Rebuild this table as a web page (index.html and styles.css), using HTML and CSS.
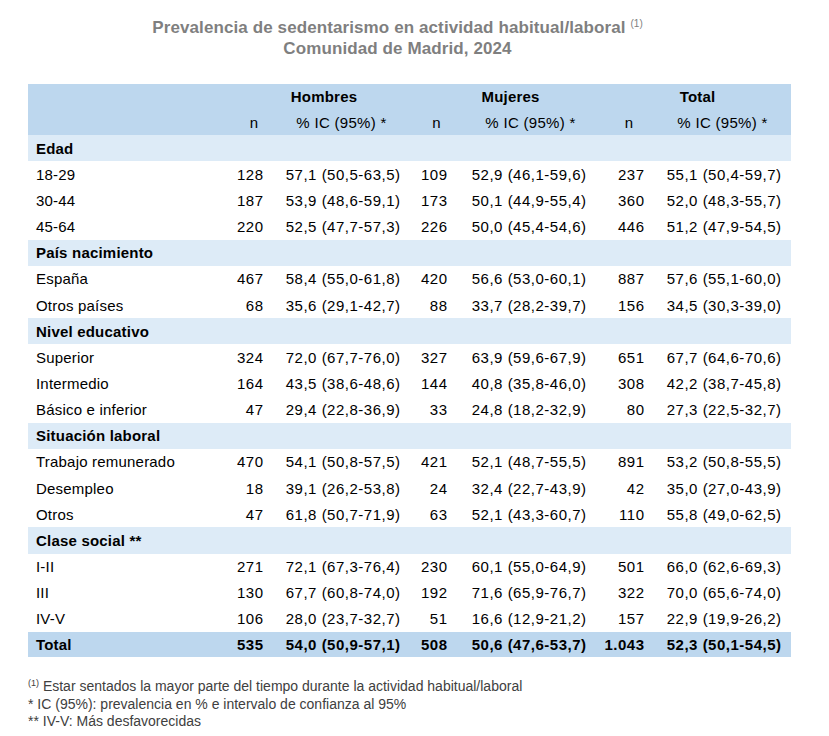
FILE: index.html
```html
<!DOCTYPE html>
<html lang="es">
<head>
<meta charset="utf-8">
<title>Prevalencia de sedentarismo</title>
<link rel="stylesheet" href="styles.css">
</head>
<body>
<div class="page">
  <header class="title">
    <div>Prevalencia de sedentarismo en actividad habitual/laboral <sup class="tsup">(1)</sup></div>
    <div>Comunidad de Madrid, 2024</div>
  </header>
  <table class="data">
    <colgroup>
      <col class="c-label"><col class="c-n1"><col class="c-p1"><col class="c-n2"><col class="c-p2"><col class="c-n3"><col class="c-p3">
    </colgroup>
    <thead>
      <tr class="h1"><th></th><th colspan="2" class="g-h">Hombres</th><th colspan="2" class="g-m">Mujeres</th><th colspan="2" class="g-t">Total</th></tr>
      <tr class="h2"><th></th><th>n</th><th>% IC (95%) *</th><th class="n-m">n</th><th class="p-m">% IC (95%) *</th><th class="n-t">n</th><th>% IC (95%) *</th></tr>
    </thead>
    <tbody>
      <tr class="sec"><td colspan="7">Edad</td></tr>
      <tr><td>18-29</td><td>128</td><td>57,1 (50,5-63,5)</td><td>109</td><td>52,9 (46,1-59,6)</td><td>237</td><td>55,1 (50,4-59,7)</td></tr>
      <tr><td>30-44</td><td>187</td><td>53,9 (48,6-59,1)</td><td>173</td><td>50,1 (44,9-55,4)</td><td>360</td><td>52,0 (48,3-55,7)</td></tr>
      <tr><td>45-64</td><td>220</td><td>52,5 (47,7-57,3)</td><td>226</td><td>50,0 (45,4-54,6)</td><td>446</td><td>51,2 (47,9-54,5)</td></tr>
      <tr class="sec"><td colspan="7">País nacimiento</td></tr>
      <tr><td>España</td><td>467</td><td>58,4 (55,0-61,8)</td><td>420</td><td>56,6 (53,0-60,1)</td><td>887</td><td>57,6 (55,1-60,0)</td></tr>
      <tr><td>Otros países</td><td>68</td><td>35,6 (29,1-42,7)</td><td>88</td><td>33,7 (28,2-39,7)</td><td>156</td><td>34,5 (30,3-39,0)</td></tr>
      <tr class="sec"><td colspan="7">Nivel educativo</td></tr>
      <tr><td>Superior</td><td>324</td><td>72,0 (67,7-76,0)</td><td>327</td><td>63,9 (59,6-67,9)</td><td>651</td><td>67,7 (64,6-70,6)</td></tr>
      <tr><td>Intermedio</td><td>164</td><td>43,5 (38,6-48,6)</td><td>144</td><td>40,8 (35,8-46,0)</td><td>308</td><td>42,2 (38,7-45,8)</td></tr>
      <tr><td>Básico e inferior</td><td>47</td><td>29,4 (22,8-36,9)</td><td>33</td><td>24,8 (18,2-32,9)</td><td>80</td><td>27,3 (22,5-32,7)</td></tr>
      <tr class="sec"><td colspan="7">Situación laboral</td></tr>
      <tr><td>Trabajo remunerado</td><td>470</td><td>54,1 (50,8-57,5)</td><td>421</td><td>52,1 (48,7-55,5)</td><td>891</td><td>53,2 (50,8-55,5)</td></tr>
      <tr><td>Desempleo</td><td>18</td><td>39,1 (26,2-53,8)</td><td>24</td><td>32,4 (22,7-43,9)</td><td>42</td><td>35,0 (27,0-43,9)</td></tr>
      <tr><td>Otros</td><td>47</td><td>61,8 (50,7-71,9)</td><td>63</td><td>52,1 (43,3-60,7)</td><td>110</td><td>55,8 (49,0-62,5)</td></tr>
      <tr class="sec"><td colspan="7">Clase social **</td></tr>
      <tr><td>I-II</td><td>271</td><td>72,1 (67,3-76,4)</td><td>230</td><td>60,1 (55,0-64,9)</td><td>501</td><td>66,0 (62,6-69,3)</td></tr>
      <tr><td>III</td><td>130</td><td>67,7 (60,8-74,0)</td><td>192</td><td>71,6 (65,9-76,7)</td><td>322</td><td>70,0 (65,6-74,0)</td></tr>
      <tr><td>IV-V</td><td>106</td><td>28,0 (23,7-32,7)</td><td>51</td><td>16,6 (12,9-21,2)</td><td>157</td><td>22,9 (19,9-26,2)</td></tr>
      <tr class="total"><td>Total</td><td>535</td><td>54,0 (50,9-57,1)</td><td>508</td><td>50,6 (47,6-53,7)</td><td>1.043</td><td>52,3 (50,1-54,5)</td></tr>
    </tbody>
  </table>
  <div class="notes">
    <div><sup class="nsup">(1)</sup> Estar sentados la mayor parte del tiempo durante la actividad habitual/laboral</div>
    <div>* IC (95%): prevalencia en % e intervalo de confianza al 95%</div>
    <div>** IV-V: Más desfavorecidas</div>
  </div>
</div>
</body>
</html>
```

FILE: styles.css
```css
html, body {
  margin: 0;
  padding: 0;
  background: #ffffff;
}

.page {
  width: 829px;
  font-family: "Liberation Sans", Arial, sans-serif;
  color: #000;
}

.title {
  width: 795px;
  padding-top: 17px;
  text-align: center;
  font-weight: bold;
  font-size: 17px;
  line-height: 21px;
  letter-spacing: 0.1px;
  color: #7f7f7f;
}

.tsup {
  font-size: 10px;
  vertical-align: 6px;
  line-height: 0;
  font-weight: normal;
  letter-spacing: 0;
  color: #7f7f7f;
}

.data {
  margin: 25px 0 0 28px;
  width: 763px;
  border-collapse: collapse;
  table-layout: fixed;
  font-size: 15px;
}

.c-label { width: 207px; }
.c-n1 { width: 38px; }
.c-p1 { width: 137px; }
.c-n2 { width: 47px; }
.c-p2 { width: 139px; }
.c-n3 { width: 58px; }
.c-p3 { width: 137px; }

.data th, .data td {
  padding: 0;
  white-space: nowrap;
}

.data thead tr {
  background: #bdd7ee;
}

.data thead th {
  font-weight: normal;
  text-align: center;
  letter-spacing: 0.3px;
}

.data .h1 { height: 25.5px; }
.data .h1 th { font-weight: bold; letter-spacing: 0.2px; }
.data .h2 { height: 25.5px; }

.data .g-h { padding-left: 3px; }
.data .g-m { padding-left: 15px; }
.data .g-t { padding-left: 8px; }
.data .n-m { padding-left: 6px; }
.data .p-m { padding-left: 8px; }
.data .n-t { padding-left: 8px; }

.data tbody tr { height: 26.16px; }

.data tbody td {
  text-align: right;
  padding-right: 9.5px;
  letter-spacing: 0.5px;
}

.data tbody td:first-child {
  text-align: left;
  padding-left: 8px;
  padding-right: 0;
  letter-spacing: 0.2px;
}

.data tr.sec {
  background: #ddebf7;
}

.data tr.sec td {
  font-weight: bold;
  text-align: left;
  padding-left: 8px;
  letter-spacing: 0.2px;
}

.data tr.total {
  background: #bdd7ee;
  height: 25.5px;
}

.data tr.total td {
  font-weight: bold;
}

.notes {
  margin: 21px 0 0 28px;
  font-size: 14px;
  line-height: 17.5px;
  color: #404040;
}

.nsup {
  font-size: 9px;
  vertical-align: 5px;
  line-height: 0;
}
```
